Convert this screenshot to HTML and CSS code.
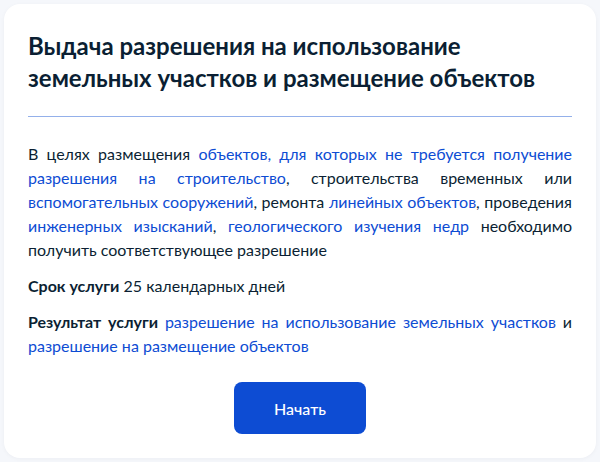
FILE: index.html
```html
<!DOCTYPE html>
<html lang="ru">
<head>
<meta charset="utf-8">
<link rel="stylesheet" href="styles.css">
</head>
<body>
<div class="card">
  <h1 class="title">Выдача разрешения на использование земельных участков и размещение объектов</h1>
  <hr class="divider">
  <p class="text">В целях размещения <a class="link" href="#">объектов, для которых не требуется получение разрешения на строительство</a>, строительства временных или <a class="link" href="#">вспомогательных сооружений</a>, ремонта <a class="link" href="#">линейных объектов</a>, проведения <a class="link" href="#">инженерных изысканий</a>, <a class="link" href="#">геологического изучения недр</a> необходимо получить соответствующее разрешение</p>
  <p class="text"><b class="label">Срок услуги</b> 25 календарных дней</p>
  <p class="text"><b class="label">Результат услуги</b> <a class="link" href="#">разрешение на использование земельных участков</a> и <a class="link" href="#">разрешение на размещение объектов</a></p>
  <div class="actions"><button class="btn">Начать</button></div>
</div>
</body>
</html>
```
FILE: styles.css
```css
html, body { margin: 0; padding: 0; }
body {
  background: #f5f7fb;
  font-family: Lato, "Noto Sans", sans-serif;
  color: #0b1f33;
  padding: 4px;
  width: 592px;
}
.card {
  background: #fff;
  border-radius: 16px;
  padding: 26px 24px 24px 24px;
  height: 454px;
  box-sizing: border-box;
  box-shadow: 0 1px 4px rgba(11, 31, 51, 0.04);
}
.title {
  margin: 0;
  font-size: 24px;
  line-height: 32px;
  font-weight: 700;
  color: #0b1f33;
}
.divider {
  border: 0;
  height: 1px;
  background: #94b0ea;
  margin: 22px 0 25px;
}
.text {
  margin: 0 0 12px;
  font-size: 16px;
  line-height: 24px;
  text-align: justify;
}
.link { color: #0d4cd3; text-decoration: none; }
.label { font-weight: 700; }
.actions {
  display: flex;
  justify-content: center;
  margin-top: 24px;
}
.btn {
  width: 132px;
  height: 52px;
  border: 0;
  border-radius: 8px;
  background: #0d4cd3;
  color: #fff;
  font-family: Lato, "Noto Sans", sans-serif;
  font-size: 16px;
  font-weight: 500;
}
```
